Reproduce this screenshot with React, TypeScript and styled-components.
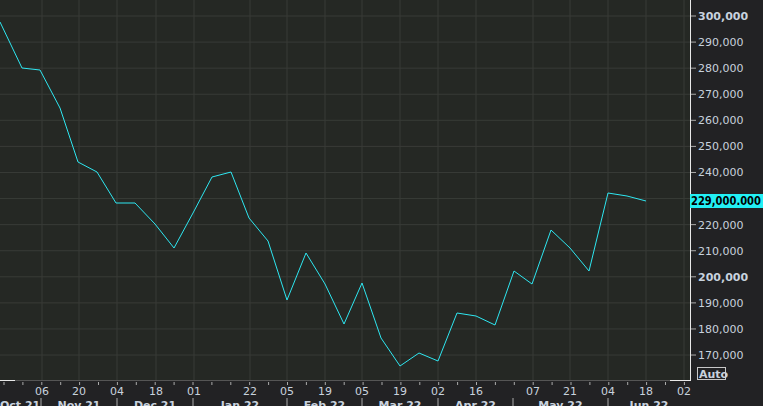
import React from "react";
import styled, { createGlobalStyle } from "styled-components";

const G = createGlobalStyle`
  html,body{margin:0;padding:0;background:#222224;overflow:hidden;}
`;
const Wrap = styled.div`
  width:763px;height:406px;background:#222224;
  font-family:"DejaVu Sans","Liberation Sans",sans-serif;
`;
const pts: [number, number][] = [[0,22],[22,68],[40,70],[60,108],[78,162],[97,172],[116,203],[135,203],[155,224],[174,248],[193,213],[212,177],[231,172],[249,218],[268,241],[287,300],[306,253],[325,284],[344,324],[362,283],[381,338],[400,366],[419,353],[438,361],[457,313],[476,316],[495,325],[514,271],[532,284],[551,230],[570,248],[589,271],[608,193],[627,196],[646,201]];
const yOf = (v: number) => 16 + (300000 - v) / 10000 * 26.08;
const vals = Array.from({ length: 14 }, (_, i) => 300000 - i * 10000);
const days: [number, string][] = [[42,"06"],[79,"20"],[117,"04"],[156,"18"],[194,"01"],[250,"22"],[287,"05"],[325,"19"],[362,"05"],[400,"19"],[438,"02"],[476,"16"],[533,"07"],[570,"21"],[608,"04"],[646,"18"],[684,"02"]];
const months: [number, number, string][] = [[0,41,"Oct 21"],[41,117,"Nov 21"],[117,193,"Dec 21"],[193,287,"Jan 22"],[287,362,"Feb 22"],[362,438,"Mar 22"],[438,513,"Apr 22"],[513,608,"May 22"],[608,690,"Jun 22"]];
const fmt = (v: number) => v.toLocaleString("en-US");

export default function App() {
  const minors: number[] = [];
  for (let x = 4; x < 690; x += 18.9) minors.push(x);
  return (
    <Wrap>
      <G />
      <svg width="763" height="406">
        <rect x="0" y="0" width="690" height="380" fill="#252824" />
        {vals.map(v => <line key={v} x1="0" x2="690" y1={yOf(v)} y2={yOf(v)} stroke="#383b37" />)}
        {days.map(([x]) => <line key={x} x1={x} x2={x} y1="0" y2="380" stroke="#383b37" />)}
        <polyline points={pts.map(p => p.join(",")).join(" ")} fill="none" stroke="#2ee6f0" strokeWidth="1" />
        <line x1="690.5" x2="690.5" y1="0" y2="381" stroke="#e8e8e8" />
        <line x1="0" x2="690" y1="380.5" y2="380.5" stroke="#555" />
        <line x1="0" x2="15" y1="380.5" y2="380.5" stroke="#e8e8e8" />
        <line x1="670" x2="690" y1="380.5" y2="380.5" stroke="#e8e8e8" />
        {vals.map(v => (
          <g key={v}>
            <line x1="691" x2="696" y1={yOf(v)} y2={yOf(v)} stroke="#aaa" />
            {v !== 230000 && <text x="698" y={yOf(v) + 4} fontSize="11" fill="#c8d2de" fontWeight={v % 100000 === 0 ? "bold" : "normal"}>{fmt(v)}</text>}
          </g>
        ))}
        <rect x="690" y="194" width="73" height="14" fill="#22f0f4" />
        <text x="691" y="205" fontSize="11.5" fontWeight="bold" fill="#000" textLength="70" lengthAdjust="spacingAndGlyphs">229,000.000</text>
        <rect x="697.5" y="367.5" width="28" height="12" fill="none" stroke="#c8c8c8" />
        <text x="699" y="378" fontSize="11" fontWeight="bold" fill="#c8d2de">Auto</text>
        {minors.map(x => <line key={x} x1={x} x2={x} y1="382" y2="385" stroke="#aaa" />)}
        {days.map(([x, l]) => <text key={x} x={x} y="395" fontSize="11" fill="#c8d2de" textAnchor="middle">{l}</text>)}
        {months.map(([a, b, l]) => (
          <g key={l}>
            {a > 0 && <line x1={a} x2={a} y1="398" y2="406" stroke="#aaa" />}
            <text x={a === 0 ? 0 : (a + b) / 2} y="409" fontSize="11" fontWeight="bold" fill="#c8d2de" textAnchor={a === 0 ? "start" : "middle"}>{l}</text>
          </g>
        ))}
      </svg>
    </Wrap>
  );
}
